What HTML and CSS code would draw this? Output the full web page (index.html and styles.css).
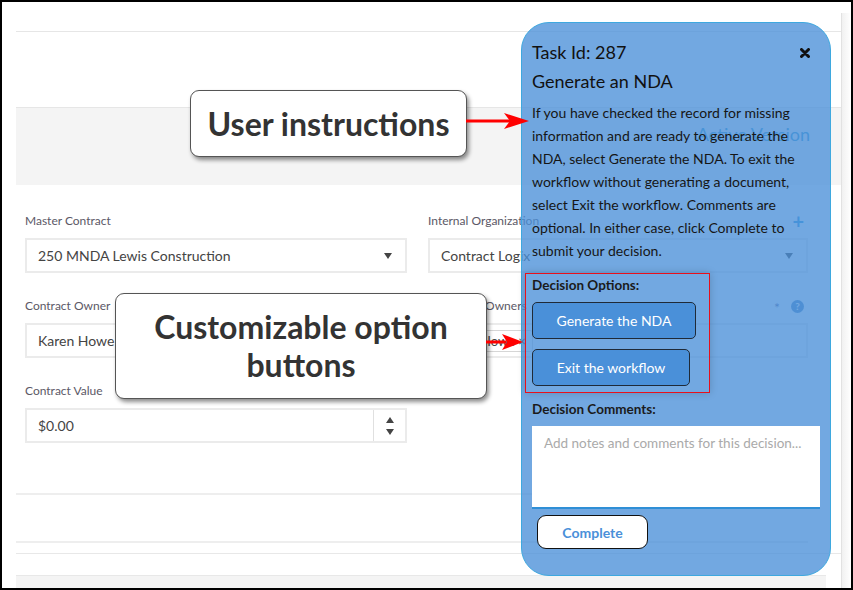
FILE: index.html
```html
<!DOCTYPE html>
<html lang="en">
<head>
  <meta charset="UTF-8">
  <meta name="viewport" content="width=device-width, initial-scale=1.0">
  <title>Contract - Generate an NDA</title>
  <link rel="stylesheet" href="styles.css">
</head>
<body>
  <div class="frame">
    <div class="page">
      <div class="top-bar"></div>

      <div class="version-bar">
        <span class="active-version">Active Version</span>
      </div>

      <div class="form">
        <div class="field">
          <label>Master Contract</label>
          <div class="input">250 MNDA Lewis Construction <span class="caret"></span></div>
        </div>
        <div class="field">
          <label>Internal Organization <span class="add">+</span></label>
          <div class="input">Contract Logix <span class="caret"></span></div>
        </div>

        <div class="field">
          <label>Contract Owner</label>
          <div class="input">Karen Howe</div>
        </div>
        <div class="field">
          <label>Additional Owners
            <span class="label-icons">
              <span class="required">*</span>
              <span class="help">?</span>
            </span>
          </label>
          <div class="input"><span class="chip">Karen Howe &times;</span></div>
        </div>

        <div class="field">
          <label>Contract Value</label>
          <div class="input input-number">
            $0.00
            <span class="spinner">
              <span class="spin-up"></span>
              <span class="spin-down"></span>
            </span>
          </div>
        </div>
      </div>

      <div class="card-footer"></div>
      <div class="divider"></div>
      <div class="bottom-band"></div>
    </div>
    <div class="scroll-edge"></div>

    <!-- task panel, drawn over the form -->
    <div class="task-panel">
      <div class="task-head">
        <span>Task Id: 287</span>
        <svg class="close" width="10" height="10" viewBox="0 0 10 10">
          <path d="M1.5 1.5 L8.5 8.5 M8.5 1.5 L1.5 8.5" stroke="#111" stroke-width="3" stroke-linecap="round"/>
        </svg>
      </div>
      <h2>Generate an NDA</h2>
      <p>If you have checked the record for missing information and are ready to generate the NDA, select Generate the NDA. To exit the workflow without generating a document, select Exit the workflow. Comments are optional. In either case, click Complete to submit your decision.</p>

      <div class="decision-box">
        <h3>Decision Options:</h3>
        <button class="option-btn btn-generate">Generate the NDA</button>
        <button class="option-btn btn-exit">Exit the workflow</button>
      </div>

      <h3 class="comments-title">Decision Comments:</h3>
      <textarea placeholder="Add notes and comments for this decision..."></textarea>
      <button class="complete-btn">Complete</button>
    </div>

    <!-- annotations -->
    <div class="callout callout-instructions">User instructions</div>
    <svg class="arrow arrow-instructions" width="63" height="16" viewBox="0 0 63 16">
      <line x1="0" y1="8" x2="44" y2="8" stroke="#f00" stroke-width="3"/>
      <polygon points="38,0 63,8 38,16 44,8" fill="#f00"/>
    </svg>

    <div class="callout callout-options">Customizable option<br>buttons</div>
    <svg class="arrow arrow-options" width="37" height="16" viewBox="0 0 37 16">
      <line x1="0" y1="8" x2="20" y2="8" stroke="#f00" stroke-width="3"/>
      <polygon points="16,0 37,8 16,16 21,8" fill="#f00"/>
    </svg>
  </div>
</body>
</html>
```

FILE: styles.css
```css
body {
  margin: 0;
  font-family: Lato, 'Open Sans', sans-serif;
  background: #fff;
}
.frame {
  position: relative;
  width: 853px;
  height: 590px;
  box-sizing: border-box;
  border: 2px solid #000;
  display: flex;
  overflow: hidden;
}
.page {
  flex: 1;
  padding-left: 14px;
  display: flex;
  flex-direction: column;
}
.page > * {
  flex-shrink: 0;
}
.scroll-edge {
  width: 9px;
  margin-top: 11px;
  border-left: 1px solid #e2e2e2;
  background: linear-gradient(to right, #f1f1f1, #fff);
}
.top-bar {
  height: 29px;
  border-bottom: 1px solid #e6e6e6;
}
.version-bar {
  margin-top: 75px;
  height: 78px;
  box-sizing: border-box;
  border-top: 1px solid #e6e6e6;
  background: #f4f4f4;
  display: flex;
  justify-content: flex-end;
  align-items: flex-start;
  padding: 14px 31px 0 0;
}
.active-version {
  font-size: 18px;
  line-height: 24px;
  color: #3d9fd0;
}

/* form */
.form {
  display: grid;
  grid-template-columns: 382px 380px;
  column-gap: 21px;
  padding: 28px 0 0 9px;
}
.field label {
  display: flex;
  justify-content: space-between;
  align-items: center;
  font-size: 12px;
  line-height: 16px;
  color: #5b5866;
  margin-bottom: 9px;
}
.add {
  color: #3a9fe0;
  font-size: 20px;
  font-weight: 700;
  line-height: 16px;
  padding-right: 4px;
}
.label-icons {
  display: flex;
  align-items: center;
  gap: 11px;
  padding-right: 4px;
}
.required {
  color: #6b6f9a;
  font-size: 14px;
  line-height: 12px;
  padding-top: 4px;
}
.help {
  width: 13px;
  height: 13px;
  border-radius: 50%;
  background: #5a8fc4;
  color: #fff;
  font-size: 10px;
  font-weight: 700;
  line-height: 13px;
  text-align: center;
}
.input {
  height: 35px;
  box-sizing: border-box;
  border: 2px solid #ebebeb;
  display: flex;
  align-items: center;
  padding: 0 13px 0 11px;
  font-size: 14px;
  color: #444;
  margin-bottom: 25px;
}
.caret {
  margin-left: auto;
  border-left: 4px solid transparent;
  border-right: 4px solid transparent;
  border-top: 6px solid #444;
}
.chip {
  margin-left: -4px;
  padding: 2px 6px;
  border: 1px solid #d6d6d6;
  border-radius: 3px;
  font-size: 13px;
}
.input-number {
  padding-right: 0;
}
.spinner {
  margin-left: auto;
  align-self: stretch;
  width: 31px;
  border-left: 1px solid #e0e0e0;
  display: flex;
  flex-direction: column;
  align-items: center;
  justify-content: center;
  gap: 6px;
}
.spin-up {
  border-left: 4px solid transparent;
  border-right: 4px solid transparent;
  border-bottom: 6px solid #444;
}
.spin-down {
  border-left: 4px solid transparent;
  border-right: 4px solid transparent;
  border-top: 6px solid #444;
}
.card-footer {
  margin-top: 25px;
  width: 792px;
  height: 46px;
  border-top: 2px solid #eeeeee;
  border-bottom: 2px solid #eeeeee;
}
.divider {
  margin-top: 10px;
  border-top: 1px solid #e8e8e8;
}
.bottom-band {
  margin-top: 21px;
  width: 810px;
  flex: 1 0 auto;
  border-top: 1px solid #e8e8e8;
  background: #f4f4f4;
}

/* task panel */
.task-panel {
  position: absolute;
  left: 519px;
  top: 20px;
  width: 310px;
  height: 554px;
  box-sizing: border-box;
  border: 1px solid #3ea8df;
  border-radius: 28px;
  background: rgba(74, 144, 217, 0.78);
  padding: 15px 10px 0 10px;
  color: #111;
}
.task-head {
  display: flex;
  justify-content: space-between;
  align-items: center;
  font-size: 18px;
  line-height: 29px;
}
.close {
  margin-right: 10px;
}
.task-panel h2 {
  margin: 0;
  font-size: 18px;
  font-weight: 400;
  line-height: 29px;
}
.task-panel p {
  margin: 5px 0 0;
  max-width: 280px;
  font-size: 14px;
  line-height: 23px;
  color: #161616;
}
.task-panel h3 {
  margin: 0;
  font-size: 13.5px;
  font-weight: 700;
  line-height: 18px;
  color: #1b1b1b;
}
.decision-box {
  margin: 11px 0 0 -7px;
  width: 185px;
  box-sizing: border-box;
  border: 1px solid #e8101a;
  padding: 2px 0 6px 6px;
  box-shadow: 0 0 8px rgba(0, 0, 0, 0.18);
}
.option-btn {
  display: block;
  height: 37px;
  margin-top: 8px;
  background: #4a90d9;
  border: 1px solid #1f2a38;
  border-radius: 5px;
  color: #fff;
  font-family: Lato, sans-serif;
  font-size: 14px;
}
.btn-generate {
  width: 164px;
}
.btn-exit {
  width: 158px;
  margin-top: 10px;
}
.comments-title {
  margin-top: 7px !important;
}
.task-panel textarea {
  display: block;
  margin-top: 8px;
  width: 288px;
  height: 83px;
  box-sizing: border-box;
  border: none;
  border-bottom: 2px solid #2f8fd6;
  padding: 9px 2px 9px 12px;
  overflow: hidden;
  resize: none;
  font-family: Lato, sans-serif;
  font-size: 13.5px;
}
.task-panel textarea::placeholder {
  color: #aaa;
}
.complete-btn {
  display: block;
  margin: 6px 0 0 5px;
  width: 111px;
  height: 34px;
  background: #fff;
  border: 1px solid #111;
  border-radius: 9px;
  color: #4a90d9;
  font-family: Lato, sans-serif;
  font-size: 14px;
  font-weight: 700;
}

/* callouts */
.callout {
  position: absolute;
  box-sizing: border-box;
  display: flex;
  align-items: center;
  justify-content: center;
  text-align: center;
  background: #fff;
  border: 1px solid #555;
  border-radius: 9px;
  box-shadow: 2px 3px 4px rgba(0, 0, 0, 0.45);
  font-weight: 700;
  color: #333;
}
.callout-instructions {
  left: 188px;
  top: 88px;
  width: 277px;
  height: 67px;
  font-size: 32px;
}
.callout-options {
  left: 113px;
  top: 291px;
  width: 372px;
  height: 106px;
  font-size: 32px;
  line-height: 38px;
}
.arrow {
  position: absolute;
}
.arrow-instructions {
  left: 464px;
  top: 111px;
}
.arrow-options {
  left: 484px;
  top: 332px;
}
```
